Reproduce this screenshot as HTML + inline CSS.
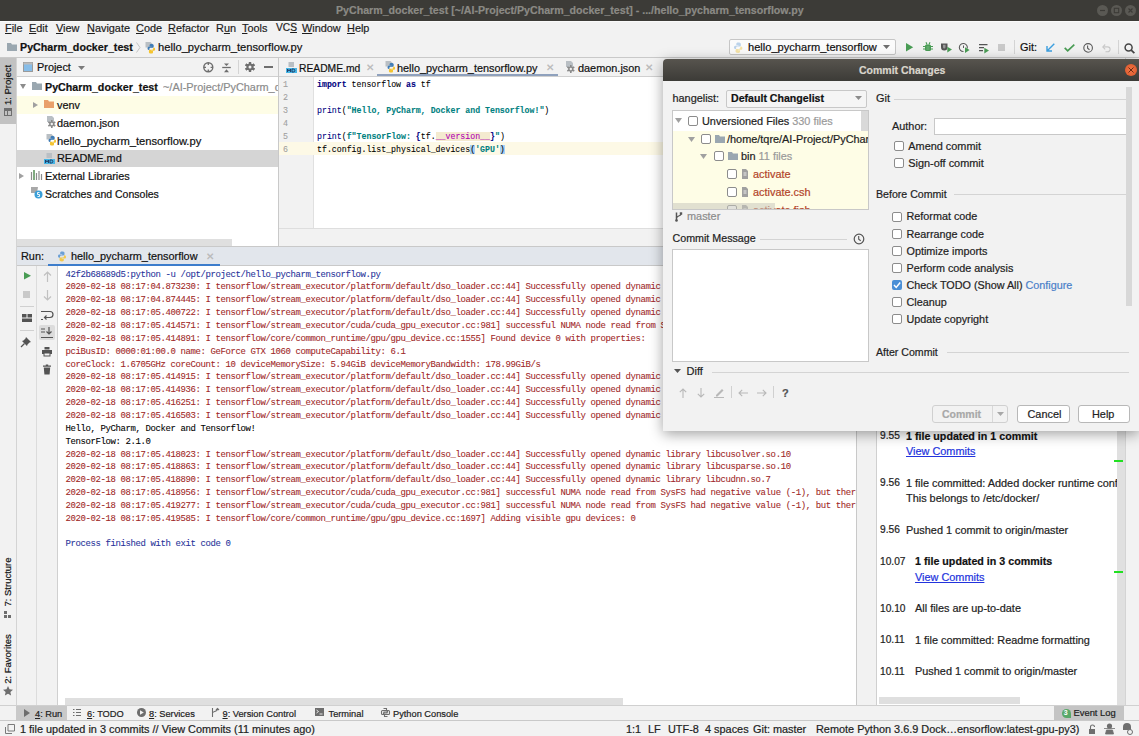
<!DOCTYPE html>
<html><head><meta charset="utf-8">
<style>
*{box-sizing:border-box;margin:0;padding:0}
html,body{width:1139px;height:736px;overflow:hidden}
body{position:relative;background:#f2f2f2;font-family:"Liberation Sans",sans-serif;font-size:10.9px;color:#1e1e1e}
.a{position:absolute}
.t{position:absolute;white-space:nowrap;line-height:14px;-webkit-text-stroke:0.2px currentColor}
.mono{font-family:"Liberation Mono",monospace;-webkit-text-stroke:0.08px currentColor}
.u{text-decoration:underline}
svg{position:absolute;overflow:visible}
</style></head><body>

<!-- ===== Title bar ===== -->
<div class="a" style="left:0;top:0;width:1139px;height:21px;background:#3c3b37"></div><div class="a" style="left:0;top:21px;width:1139px;height:1px;background:#fafafa"></div>
<div class="t" style="left:336px;top:3px;font-weight:bold;font-size:10.64px;color:#8b8a85">PyCharm_docker_test [~/AI-Project/PyCharm_docker_test] - .../hello_pycharm_tensorflow.py</div>
<div class="a" style="left:1096.5px;top:4.7px;width:11px;height:11px;border-radius:50%;background:#5a5954"></div>
<div class="a" style="left:1110.5px;top:4.7px;width:11px;height:11px;border-radius:50%;background:#5a5954"></div>
<div class="a" style="left:1124.8px;top:4.7px;width:11px;height:11px;border-radius:50%;background:#5a5954"></div>
<svg style="left:1096.5px;top:4.7px" width="11" height="11"><path d="M3 5.5h5" stroke="#3c3b37" stroke-width="1.2"/></svg>
<svg style="left:1110.5px;top:4.7px" width="11" height="11"><rect x="3.3" y="3.3" width="4.4" height="4.4" fill="none" stroke="#3c3b37" stroke-width="1.1"/></svg>
<svg style="left:1124.8px;top:4.7px" width="11" height="11"><path d="M3.5 3.5l4 4M7.5 3.5l-4 4" stroke="#3c3b37" stroke-width="1.1"/></svg>

<!-- ===== Menu bar ===== -->
<div class="a" style="left:0;top:22px;width:1139px;height:16px;background:#f2f2f2"></div>
<div class="t" style="left:5px;top:21px"><span class="u">F</span>ile</div>
<div class="t" style="left:29px;top:21px"><span class="u">E</span>dit</div>
<div class="t" style="left:56px;top:21px"><span class="u">V</span>iew</div>
<div class="t" style="left:87px;top:21px"><span class="u">N</span>avigate</div>
<div class="t" style="left:136px;top:21px"><span class="u">C</span>ode</div>
<div class="t" style="left:168px;top:21px"><span class="u">R</span>efactor</div>
<div class="t" style="left:216px;top:21px">R<span class="u">u</span>n</div>
<div class="t" style="left:242px;top:21px"><span class="u">T</span>ools</div>
<div class="t" style="left:276px;top:21px;font-size:10.2px">VC<span class="u">S</span></div>
<div class="t" style="left:302px;top:21px"><span class="u">W</span>indow</div>
<div class="t" style="left:347px;top:21px"><span class="u">H</span>elp</div>

<!-- ===== Nav bar ===== -->
<div class="a" style="left:0;top:38px;width:1139px;height:20px;background:#f2f2f2;border-bottom:1px solid #c9c9c9"></div>


<svg style="left:7px;top:43px" width="10" height="8"><path d="M0 0h4l1 1.5h5V8H0z" fill="#9aa7b0"/></svg>
<div class="t" style="left:20px;top:40px;font-weight:bold;font-size:10.7px;color:#111">PyCharm_docker_test</div>
<svg style="left:136px;top:42px" width="5" height="11"><path d="M0.5 0.5L4 5.5L0.5 10.5" fill="none" stroke="#c4c4c4" stroke-width="1"/></svg>
<svg style="left:145px;top:42px" width="11" height="12"><path d="M0.5 0h5l2 2v3.5h-7z" fill="#b9bfc4"/><g transform="translate(2.5 2) scale(0.95)"><path d="M4 0C2.6 0 2.2 .6 2.2 1.4V2.6H4.3V3H1.3C.5 3 0 3.7 0 4.6S.5 6.3 1.3 6.3H2V5.2C2 4.4 2.6 3.9 3.4 3.9H5.4C6 3.9 6.5 3.4 6.5 2.8V1.4C6.5 .6 5.8 0 4 0Z" fill="#3f7cb6"/><path d="M4 10C5.4 10 5.8 9.4 5.8 8.6V7.4H3.7V7H6.7C7.5 7 8 6.3 8 5.4S7.5 3.7 6.7 3.7H6V4.8C6 5.6 5.4 6.1 4.6 6.1H2.6C2 6.1 1.5 6.6 1.5 7.2V8.6C1.5 9.4 2.2 10 4 10Z" fill="#f4c430"/></g></svg>
<div class="t" style="left:158px;top:40px;color:#111;font-size:11.2px">hello_pycharm_tensorflow.py</div>

<div class="a" style="left:729px;top:39px;width:167px;height:16px;background:#fbfbfb;border:1px solid #c6c6c6;border-radius:2px"></div>
<svg style="left:733px;top:41.5px" width="11" height="11"><g transform="translate(1 0.5) scale(1.05)"><path d="M4 0C2.6 0 2.2 .6 2.2 1.4V2.6H4.3V3H1.3C.5 3 0 3.7 0 4.6S.5 6.3 1.3 6.3H2V5.2C2 4.4 2.6 3.9 3.4 3.9H5.4C6 3.9 6.5 3.4 6.5 2.8V1.4C6.5 .6 5.8 0 4 0Z" fill="#bcd3ea"/><path d="M4 10C5.4 10 5.8 9.4 5.8 8.6V7.4H3.7V7H6.7C7.5 7 8 6.3 8 5.4S7.5 3.7 6.7 3.7H6V4.8C6 5.6 5.4 6.1 4.6 6.1H2.6C2 6.1 1.5 6.6 1.5 7.2V8.6C1.5 9.4 2.2 10 4 10Z" fill="#f5e3a6"/></g></svg>
<div class="t" style="left:748px;top:40px;font-size:11.1px;color:#111">hello_pycharm_tensorflow</div>
<svg style="left:883px;top:45px" width="8" height="5"><path d="M0 0h7L3.5 4z" fill="#6e6e6e"/></svg>

<svg style="left:906px;top:43px" width="8" height="9"><path d="M0 0L7.2 4.2L0 8.4z" fill="#499c54"/></svg>
<svg style="left:922.5px;top:42px" width="10" height="10"><rect x="2" y="2.5" width="6" height="6.5" rx="1.5" fill="#499c54"/><path d="M3 0.3l1 2.2M7 0.3l-1 2.2M0 4.5h2M8 4.5h2M0 7h2M8 7h2" stroke="#499c54" stroke-width="1.1"/><path d="M3.5 5h3M3.5 7h3" stroke="#8fc79a" stroke-width="0.7"/></svg>
<svg style="left:940.5px;top:43px" width="12" height="10"><path d="M0 0.5h6.5v3.5a3.25 3.5 0 0 1-6.5 0z" fill="#545454"/><path d="M2 1.8h2.5v2.2a1.25 1.5 0 0 1-2.5 0z" fill="#9a9a9a"/><path d="M6.3 3.8L11 6.6L6.3 9.4z" fill="#499c54"/></svg>
<svg style="left:959px;top:42.5px" width="12" height="10"><path d="M8.2 5.5A4 4 0 1 0 4.5 8.5" fill="none" stroke="#5a5a5a" stroke-width="1.1"/><path d="M4.5 2.5v2.5" stroke="#5a5a5a" stroke-width="1"/><path d="M6 4.3L10.6 7.1L6 9.9z" fill="#499c54"/></svg>
<svg style="left:978.5px;top:43.5px" width="11" height="10"><path d="M0 0.6h8.5M0 3.6h5M0 6.6h4" stroke="#545454" stroke-width="1.2"/><path d="M5.3 3.8L10 6.6L5.3 9.4z" fill="#499c54"/></svg>
<div class="a" style="left:998px;top:44px;width:7px;height:7px;background:#c9c9c9"></div>
<div class="a" style="left:1013.5px;top:40px;width:1px;height:14px;background:#d4d4d4"></div>
<div class="t" style="left:1020px;top:40px;font-size:10.9px;color:#111">Git:</div>
<svg style="left:1046px;top:43px" width="9" height="9"><path d="M8.3 0.7L1.5 7.5M1 3v5h5" fill="none" stroke="#3d9fdf" stroke-width="1.4"/></svg>
<svg style="left:1064px;top:43.5px" width="11" height="8"><path d="M0.7 3.8l3 3L10.3 0.7" fill="none" stroke="#499c54" stroke-width="1.7"/></svg>
<svg style="left:1082.5px;top:42.5px" width="11" height="10"><circle cx="5.1" cy="4.9" r="4.3" fill="none" stroke="#5a5a5a" stroke-width="1.1"/><path d="M4.6 2.4v2.9l1.9 1.4" stroke="#5a5a5a" stroke-width="1.1" fill="none"/></svg>
<svg style="left:1102px;top:44px" width="10" height="8"><path d="M3.2 0.5L0.8 2.9l2.4 2.4" fill="none" stroke="#c8c8c8" stroke-width="1.1"/><path d="M1 2.9h4.7a2.4 2.4 0 0 1 0 4.8H3.5" fill="none" stroke="#c8c8c8" stroke-width="1.1"/></svg>
<div class="a" style="left:1117.5px;top:40px;width:1px;height:14px;background:#d4d4d4"></div>
<svg style="left:1124px;top:42.5px" width="12" height="11"><circle cx="4.6" cy="4.5" r="3.5" fill="none" stroke="#454545" stroke-width="1.5"/><path d="M7.2 7.1L10.4 10.2" stroke="#454545" stroke-width="1.7"/></svg>
<!-- ===== Left strip ===== -->
<div class="a" style="left:0;top:58px;width:17px;height:647px;background:#f2f2f2;border-right:1px solid #d4d4d4"></div>
<div class="a" style="left:0;top:58px;width:16px;height:66px;background:#c2c2c2"></div>

<!-- ===== Project panel ===== -->
<div class="a" style="left:17px;top:58px;width:262px;height:19px;background:#f2f2f2;border-bottom:1px solid #d0d0d0"></div>
<div class="a" style="left:17px;top:77px;width:261px;height:169px;background:#fff"></div>
<div class="a" style="left:278px;top:58px;width:1px;height:188px;background:#c9c9c9"></div>

<!-- ===== Editor ===== -->
<div class="a" style="left:279px;top:58px;width:400px;height:19px;background:#f2f2f2;border-bottom:1px solid #d0d0d0"></div>
<div class="a" style="left:279px;top:77px;width:400px;height:151px;background:#fff"></div>
<div class="a" style="left:279px;top:77px;width:35px;height:151px;background:#f2f2f2;border-right:1px solid #e0e0e0"></div>
<div class="a" style="left:279px;top:228px;width:400px;height:18px;background:#f2f2f2;border-top:1px solid #dedede"></div>

<div class="t" style="left:8px;top:85px;font-size:9.5px;color:#111;line-height:12px;transform:translate(-50%,-50%) rotate(-90deg)">1: Project</div><svg style="left:4px;top:108px" width="8" height="8"><path d="M0 0h8v8H0z M2 2v6M5 2v6" fill="#6e6e6e"/><path d="M1 3h2v4H1zM4 3h3v4H4z" fill="#c2c2c2"/></svg><div class="t" style="left:8px;top:582px;font-size:9.5px;color:#111;line-height:12px;transform:translate(-50%,-50%) rotate(-90deg)">7: Structure</div><svg style="left:4px;top:611px" width="7" height="7"><path d="M0 4h3v3H0zM4 4h3v3H4zM0 0h3v3H0z" fill="#6e6e6e"/></svg><div class="t" style="left:8px;top:659px;font-size:9.5px;color:#111;line-height:12px;transform:translate(-50%,-50%) rotate(-90deg)">2: Favorites</div><svg style="left:3px;top:686px" width="10" height="10"><path d="M5 0l1.5 3.3 3.5.4-2.6 2.4.7 3.5L5 7.8 1.9 9.6l.7-3.5L0 3.7l3.5-.4z" fill="#6e6e6e"/></svg>
<svg style="left:23px;top:62px" width="10" height="10"><rect x="0.5" y="0.5" width="9" height="9" fill="#87bde8" stroke="#9a9a9a"/><rect x="0.5" y="0.5" width="9" height="2" fill="#bbb"/></svg>
<div class="t" style="left:37px;top:60px;color:#111">Project</div>
<svg style="left:78px;top:66px" width="7" height="4"><path d="M0 0h7L3.5 4z" fill="#7a7a7a"/></svg>
<svg style="left:202.5px;top:61.8px" width="11" height="11"><circle cx="5.3" cy="5.3" r="4.5" fill="none" stroke="#6e6e6e" stroke-width="1.4"/><path d="M5.3 0.8v2.2M5.3 7.6v2.2M0.8 5.3h2.2M7.6 5.3h2.2" stroke="#6e6e6e" stroke-width="1.3"/></svg>
<svg style="left:222px;top:62.5px" width="9" height="10"><path d="M0.2 4.5h8.6" stroke="#6e6e6e" stroke-width="1.3"/><path d="M2 0.5h5L4.5 3zM2 9.3h5L4.5 6.3z" fill="#6e6e6e"/></svg>
<div class="a" style="left:238px;top:60px;width:1px;height:14px;background:#d4d4d4"></div>
<svg style="left:245.2px;top:62.3px" width="10" height="10"><g fill="#6e6e6e"><rect x="3.9" y="0" width="2.2" height="10" transform="rotate(0 5 5)"/><rect x="3.9" y="0" width="2.2" height="10" transform="rotate(60 5 5)"/><rect x="3.9" y="0" width="2.2" height="10" transform="rotate(120 5 5)"/><rect x="3.9" y="0" width="2.2" height="10" transform="rotate(180 5 5)"/><rect x="3.9" y="0" width="2.2" height="10" transform="rotate(240 5 5)"/><rect x="3.9" y="0" width="2.2" height="10" transform="rotate(300 5 5)"/></g><circle cx="5" cy="5" r="3.4" fill="#6e6e6e"/><circle cx="5" cy="5" r="1.5" fill="#f2f2f2"/></svg>
<div class="a" style="left:264px;top:66.4px;width:9px;height:1.6px;background:#6e6e6e"></div>
<div class="a" style="left:17px;top:96px;width:261px;height:18px;background:#fefde6"></div>
<div class="a" style="left:17px;top:150px;width:261px;height:17px;background:#d5d5d5"></div>

<svg style="left:20px;top:84px" width="6" height="5"><path d="M0 0h6L3 5z" fill="#8c8c8c"/></svg>
<svg style="left:32px;top:82px" width="10" height="8"><path d="M0 0h4l1 1.5h5V8H0z" fill="#9aa7b0"/></svg>
<div class="t" style="left:45px;top:80px;font-weight:bold;font-size:10.7px;color:#111">PyCharm_docker_test</div>
<div class="t" style="left:163px;top:80px;color:#8c8c8c;width:115px;overflow:hidden">~/AI-Project/PyCharm_docker_test</div>

<svg style="left:33px;top:102px" width="5" height="6"><path d="M0 0v6l5-3z" fill="#a0a0a0"/></svg>
<svg style="left:44px;top:100px" width="10" height="8"><path d="M0 0h4l1 1.5h5V8H0z" fill="#e9a06a"/></svg>
<div class="t" style="left:57px;top:98px;color:#111">venv</div>

<svg style="left:45.5px;top:115.5px" width="10" height="12"><path d="M1 0h5l2 2v4H1z" fill="#b9bfc4"/><g fill="#8a8a8a"><rect x="5" y="4" width="1.6" height="8"/><rect x="5" y="4" width="1.6" height="8" transform="rotate(60 5.8 8)"/><rect x="5" y="4" width="1.6" height="8" transform="rotate(120 5.8 8)"/></g><circle cx="5.8" cy="8" r="2.6" fill="#8a8a8a"/><circle cx="5.8" cy="8" r="1.2" fill="#f0f0f0"/></svg>
<div class="t" style="left:57px;top:115.5px;color:#111">daemon.json</div>

<svg style="left:46px;top:134px" width="11" height="12"><path d="M0.5 0h5l2 2v3.5h-7z" fill="#b9bfc4"/><g transform="translate(2.5 2) scale(0.95)"><path d="M4 0C2.6 0 2.2 .6 2.2 1.4V2.6H4.3V3H1.3C.5 3 0 3.7 0 4.6S.5 6.3 1.3 6.3H2V5.2C2 4.4 2.6 3.9 3.4 3.9H5.4C6 3.9 6.5 3.4 6.5 2.8V1.4C6.5 .6 5.8 0 4 0Z" fill="#3f7cb6"/><path d="M4 10C5.4 10 5.8 9.4 5.8 8.6V7.4H3.7V7H6.7C7.5 7 8 6.3 8 5.4S7.5 3.7 6.7 3.7H6V4.8C6 5.6 5.4 6.1 4.6 6.1H2.6C2 6.1 1.5 6.6 1.5 7.2V8.6C1.5 9.4 2.2 10 4 10Z" fill="#f4c430"/></g></svg>
<div class="t" style="left:57px;top:133.5px;color:#111;font-size:11.2px">hello_pycharm_tensorflow.py</div>

<svg style="left:44px;top:152px" width="11" height="12"><path d="M2.5 1h5.5v5H2.5z" fill="#b9bfc4"/><rect x="0" y="7" width="11" height="5" fill="#46b5e5"/><path d="M1.5 11V8l1.5 2 1.5-2v3M6 8v3h1.3a1.5 1.5 0 0 0 0-3z" stroke="#1d3560" stroke-width="0.9" fill="none"/></svg>
<div class="t" style="left:57px;top:151px;color:#111">README.md</div>

<svg style="left:19px;top:173px" width="5" height="6"><path d="M0 0v6l5-3z" fill="#a0a0a0"/></svg>
<svg style="left:31px;top:170px" width="11" height="10"><path d="M0.5 2v8M3 0v10M5.5 3v7M8 1v9M10.5 4v6" stroke="#8c8c8c" stroke-width="1.2"/><path d="M3 0v10" stroke="#5aa05a" stroke-width="1.2"/></svg>
<div class="t" style="left:45px;top:169px;color:#111">External Libraries</div>

<svg style="left:31px;top:187px" width="12" height="12"><path d="M0 0h7l-1 6H0z" fill="#a8a8a8"/><circle cx="7.5" cy="7.5" r="4" fill="#3b9fd8"/><path d="M8.5 5.5h-2v2h2v2h-2" stroke="#fff" stroke-width="0.9" fill="none"/></svg>
<div class="t" style="left:45px;top:186.5px;color:#111;font-size:10.5px">Scratches and Consoles</div>

<div class="a" style="left:17px;top:239px;width:215px;height:7px;background:#dfdfdf"></div>

<svg style="left:286px;top:61px" width="11" height="12"><path d="M2.5 1h5.5v5H2.5z" fill="#b9bfc4"/><rect x="0" y="7" width="11" height="5" fill="#46b5e5"/><path d="M1.5 11V8l1.5 2 1.5-2v3M6 8v3h1.3a1.5 1.5 0 0 0 0-3z" stroke="#1d3560" stroke-width="0.9" fill="none"/></svg>
<div class="t" style="left:299px;top:61.6px;font-size:10.3px;color:#111">README.md</div>
<div class="t" style="left:366px;top:60px;color:#b8b8b8;font-size:9.5px;margin-top:1px">&#x2715;</div>
<svg style="left:385px;top:61px" width="11" height="12"><path d="M0.5 0h5l2 2v3.5h-7z" fill="#b9bfc4"/><g transform="translate(2.5 2) scale(0.95)"><path d="M4 0C2.6 0 2.2 .6 2.2 1.4V2.6H4.3V3H1.3C.5 3 0 3.7 0 4.6S.5 6.3 1.3 6.3H2V5.2C2 4.4 2.6 3.9 3.4 3.9H5.4C6 3.9 6.5 3.4 6.5 2.8V1.4C6.5 .6 5.8 0 4 0Z" fill="#3f7cb6"/><path d="M4 10C5.4 10 5.8 9.4 5.8 8.6V7.4H3.7V7H6.7C7.5 7 8 6.3 8 5.4S7.5 3.7 6.7 3.7H6V4.8C6 5.6 5.4 6.1 4.6 6.1H2.6C2 6.1 1.5 6.6 1.5 7.2V8.6C1.5 9.4 2.2 10 4 10Z" fill="#f4c430"/></g></svg>
<div class="t" style="left:397px;top:61px;color:#111">hello_pycharm_tensorflow.py</div>
<div class="t" style="left:546px;top:60px;color:#b8b8b8;font-size:9.5px;margin-top:1px">&#x2715;</div>
<div class="a" style="left:377px;top:74px;width:181px;height:2px;background:#8fa1bd"></div>
<svg style="left:565px;top:61px" width="10" height="12"><path d="M1 0h5l2 2v4H1z" fill="#b9bfc4"/><g fill="#8a8a8a"><rect x="5" y="4" width="1.6" height="8"/><rect x="5" y="4" width="1.6" height="8" transform="rotate(60 5.8 8)"/><rect x="5" y="4" width="1.6" height="8" transform="rotate(120 5.8 8)"/></g><circle cx="5.8" cy="8" r="2.6" fill="#8a8a8a"/><circle cx="5.8" cy="8" r="1.2" fill="#f0f0f0"/></svg>
<div class="t" style="left:578px;top:61px;color:#111">daemon.json</div>
<div class="t" style="left:645px;top:60px;color:#b8b8b8;font-size:9.5px;margin-top:1px">&#x2715;</div>


<div class="a" style="left:279px;top:142px;width:384px;height:13px;background:#fdf9e6"></div>
<div class="mono a" style="left:283px;top:77.5px;font-size:8.3px;line-height:13px;color:#a0a0a0;white-space:pre">1
2
3
4
5
6</div>
<div class="mono a" style="left:317px;top:77.5px;font-size:8.24px;line-height:13px;color:#000;white-space:pre"><b style="color:#000080">import</b> tensorflow <b style="color:#000080">as</b> tf

<span style="color:#000080">print</span>(<b style="color:#008080">"Hello, PyCharm, Docker and Tensorflow!"</b>)

<span style="color:#000080">print</span>(<b style="color:#008080">f"TensorFlow: </b><b style="color:#000080">{</b>tf.<span style="color:#b200b2;background:#f4ead0">__version__</span><b style="color:#000080">}</b><b style="color:#008080">"</b>)
tf.config.list_physical_devices<span style="background:#a7d0f5">(</span><b style="color:#008080">'GPU'</b><span style="background:#a7d0f5">)</span></div>

<!-- ===== Run panel ===== -->
<div class="a" style="left:17px;top:246px;width:840px;height:20px;background:#e2e6ec;border-top:1px solid #c9c9c9;border-bottom:1px solid #c9c9c9"></div>
<div class="a" style="left:17px;top:266px;width:40px;height:439px;background:#f2f2f2"></div>
<div class="a" style="left:36px;top:266px;width:1px;height:439px;background:#dcdcdc"></div>
<div class="a" style="left:57px;top:266px;width:800px;height:439px;background:#fff;border-left:1px solid #d0d0d0"></div>


<div class="t" style="left:21px;top:249px;color:#111">Run:</div>
<svg style="left:57px;top:251px" width="11" height="11"><g transform="translate(1 0.5) scale(1.0)"><path d="M4 0C2.6 0 2.2 .6 2.2 1.4V2.6H4.3V3H1.3C.5 3 0 3.7 0 4.6S.5 6.3 1.3 6.3H2V5.2C2 4.4 2.6 3.9 3.4 3.9H5.4C6 3.9 6.5 3.4 6.5 2.8V1.4C6.5 .6 5.8 0 4 0Z" fill="#6a9fd6"/><path d="M4 10C5.4 10 5.8 9.4 5.8 8.6V7.4H3.7V7H6.7C7.5 7 8 6.3 8 5.4S7.5 3.7 6.7 3.7H6V4.8C6 5.6 5.4 6.1 4.6 6.1H2.6C2 6.1 1.5 6.6 1.5 7.2V8.6C1.5 9.4 2.2 10 4 10Z" fill="#f2c94c"/></g></svg>
<div class="t" style="left:71px;top:249px;color:#111">hello_pycharm_tensorflow</div>
<div class="t" style="left:206px;top:249px;color:#b8b8b8;font-size:9.5px;margin-top:1px">&#x2715;</div>
<div class="a" style="left:48px;top:263.5px;width:172px;height:2.5px;background:#3d7dcc"></div>

<svg style="left:23.5px;top:272px" width="8" height="9"><path d="M0 0L7 3.8L0 7.6z" fill="#499c54"/></svg>
<div class="a" style="left:23px;top:291px;width:7px;height:7px;background:#c9c9c9"></div>
<div class="a" style="left:20px;top:306px;width:14px;height:1px;background:#d0d0d0"></div>
<svg style="left:22px;top:314px" width="10" height="8"><path d="M0 0h4.5v3.5H0zM5.5 0H10v3.5H5.5zM0 4.5h10V8H0z" fill="#545454"/></svg>
<div class="a" style="left:20px;top:330px;width:14px;height:1px;background:#d0d0d0"></div>
<svg style="left:21px;top:336px" width="11" height="11"><path d="M5 1l5 5-1.5.5-2 2L6 10 1 5l1.5-.5 2-2z" fill="#545454"/><path d="M3.5 7.5L0 11" stroke="#545454" stroke-width="1.3"/></svg>

<svg style="left:43px;top:271px" width="9" height="11"><path d="M4.5 1v10M1 4.5l3.5-3.5L8 4.5" fill="none" stroke="#c0c0c0" stroke-width="1.2"/></svg>
<svg style="left:43px;top:290px" width="9" height="11"><path d="M4.5 0v10M1 6.5l3.5 3.5L8 6.5" fill="none" stroke="#c0c0c0" stroke-width="1.2"/></svg>
<svg style="left:41px;top:310px" width="12" height="11"><path d="M0 1.5h9a3 3 0 0 1 0 6H4" fill="none" stroke="#545454" stroke-width="1.2"/><path d="M5.5 5.5L3.5 7.5l2 2M0 9.5h2" fill="none" stroke="#545454" stroke-width="1.2"/></svg>
<div class="a" style="left:39px;top:325px;width:16px;height:15px;background:#dcdcdc;border-radius:2px"></div>
<svg style="left:41px;top:327px" width="12" height="11"><path d="M0 2h4M0 5h4M0 10.5h12M8 0v7M5.5 4.5L8 7l2.5-2.5" fill="none" stroke="#545454" stroke-width="1.2"/></svg>
<svg style="left:42px;top:347px" width="10" height="10"><path d="M2.5 0h5v2.5h-5z" fill="#545454"/><path d="M0 3h10v4H8.5v2.5h-7V7H0z" fill="#545454"/><path d="M2.5 6.5h5v2h-5z" fill="#f2f2f2"/></svg>
<svg style="left:43px;top:364.5px" width="8" height="10"><path d="M0 1.2h8M2.8 0h2.4" stroke="#545454" stroke-width="1.2"/><path d="M0.8 2.5h6.4l-.6 7H1.4z" fill="#545454"/></svg>
<div class="a" style="left:58px;top:266px;width:798px;height:439px;overflow:hidden">
<div class="mono a" style="left:7.5px;top:1.60px;font-size:9px;letter-spacing:-0.4px;line-height:12px;white-space:pre;transform:scaleY(1.08);transform-origin:0 0"><span style="color:#27339a">42f2b68689d5:python -u /opt/project/hello_pycharm_tensorflow.py</span></div>
<div class="mono a" style="left:7.5px;top:14.45px;font-size:9px;letter-spacing:-0.4px;line-height:12px;white-space:pre;transform:scaleY(1.08);transform-origin:0 0"><span style="color:#a02828">2020-02-18 08:17:04.873230: I tensorflow/stream_executor/platform/default/dso_loader.cc:44] Successfully opened dynamic library libnvinfer.so.6</span></div>
<div class="mono a" style="left:7.5px;top:27.30px;font-size:9px;letter-spacing:-0.4px;line-height:12px;white-space:pre;transform:scaleY(1.08);transform-origin:0 0"><span style="color:#a02828">2020-02-18 08:17:04.874445: I tensorflow/stream_executor/platform/default/dso_loader.cc:44] Successfully opened dynamic library libnvinfer_plugin.so.6</span></div>
<div class="mono a" style="left:7.5px;top:40.15px;font-size:9px;letter-spacing:-0.4px;line-height:12px;white-space:pre;transform:scaleY(1.08);transform-origin:0 0"><span style="color:#a02828">2020-02-18 08:17:05.400722: I tensorflow/stream_executor/platform/default/dso_loader.cc:44] Successfully opened dynamic library libcuda.so.1</span></div>
<div class="mono a" style="left:7.5px;top:53.00px;font-size:9px;letter-spacing:-0.4px;line-height:12px;white-space:pre;transform:scaleY(1.08);transform-origin:0 0"><span style="color:#a02828">2020-02-18 08:17:05.414571: I tensorflow/stream_executor/cuda/cuda_gpu_executor.cc:981] successful NUMA node read from SysFS had negative value (-1), but there must be at least one NUMA node</span></div>
<div class="mono a" style="left:7.5px;top:65.85px;font-size:9px;letter-spacing:-0.4px;line-height:12px;white-space:pre;transform:scaleY(1.08);transform-origin:0 0"><span style="color:#a02828">2020-02-18 08:17:05.414891: I tensorflow/core/common_runtime/gpu/gpu_device.cc:1555] Found device 0 with properties:</span></div>
<div class="mono a" style="left:7.5px;top:78.70px;font-size:9px;letter-spacing:-0.4px;line-height:12px;white-space:pre;transform:scaleY(1.08);transform-origin:0 0"><span style="color:#a02828">pciBusID: 0000:01:00.0 name: GeForce GTX 1060 computeCapability: 6.1</span></div>
<div class="mono a" style="left:7.5px;top:91.55px;font-size:9px;letter-spacing:-0.4px;line-height:12px;white-space:pre;transform:scaleY(1.08);transform-origin:0 0"><span style="color:#a02828">coreClock: 1.6705GHz coreCount: 10 deviceMemorySize: 5.94GiB deviceMemoryBandwidth: 178.99GiB/s</span></div>
<div class="mono a" style="left:7.5px;top:104.40px;font-size:9px;letter-spacing:-0.4px;line-height:12px;white-space:pre;transform:scaleY(1.08);transform-origin:0 0"><span style="color:#a02828">2020-02-18 08:17:05.414915: I tensorflow/stream_executor/platform/default/dso_loader.cc:44] Successfully opened dynamic library libcudart.so.10.1</span></div>
<div class="mono a" style="left:7.5px;top:117.25px;font-size:9px;letter-spacing:-0.4px;line-height:12px;white-space:pre;transform:scaleY(1.08);transform-origin:0 0"><span style="color:#a02828">2020-02-18 08:17:05.414936: I tensorflow/stream_executor/platform/default/dso_loader.cc:44] Successfully opened dynamic library libcublas.so.10</span></div>
<div class="mono a" style="left:7.5px;top:130.10px;font-size:9px;letter-spacing:-0.4px;line-height:12px;white-space:pre;transform:scaleY(1.08);transform-origin:0 0"><span style="color:#a02828">2020-02-18 08:17:05.416251: I tensorflow/stream_executor/platform/default/dso_loader.cc:44] Successfully opened dynamic library libcufft.so.10</span></div>
<div class="mono a" style="left:7.5px;top:142.95px;font-size:9px;letter-spacing:-0.4px;line-height:12px;white-space:pre;transform:scaleY(1.08);transform-origin:0 0"><span style="color:#a02828">2020-02-18 08:17:05.416503: I tensorflow/stream_executor/platform/default/dso_loader.cc:44] Successfully opened dynamic library libcurand.so.10</span></div>
<div class="mono a" style="left:7.5px;top:155.80px;font-size:9px;letter-spacing:-0.4px;line-height:12px;white-space:pre;transform:scaleY(1.08);transform-origin:0 0"><span style="color:#000">Hello, PyCharm, Docker and Tensorflow!</span></div>
<div class="mono a" style="left:7.5px;top:168.65px;font-size:9px;letter-spacing:-0.4px;line-height:12px;white-space:pre;transform:scaleY(1.08);transform-origin:0 0"><span style="color:#000">TensorFlow: 2.1.0</span></div>
<div class="mono a" style="left:7.5px;top:181.50px;font-size:9px;letter-spacing:-0.4px;line-height:12px;white-space:pre;transform:scaleY(1.08);transform-origin:0 0"><span style="color:#a02828">2020-02-18 08:17:05.418023: I tensorflow/stream_executor/platform/default/dso_loader.cc:44] Successfully opened dynamic library libcusolver.so.10</span></div>
<div class="mono a" style="left:7.5px;top:194.35px;font-size:9px;letter-spacing:-0.4px;line-height:12px;white-space:pre;transform:scaleY(1.08);transform-origin:0 0"><span style="color:#a02828">2020-02-18 08:17:05.418863: I tensorflow/stream_executor/platform/default/dso_loader.cc:44] Successfully opened dynamic library libcusparse.so.10</span></div>
<div class="mono a" style="left:7.5px;top:207.20px;font-size:9px;letter-spacing:-0.4px;line-height:12px;white-space:pre;transform:scaleY(1.08);transform-origin:0 0"><span style="color:#a02828">2020-02-18 08:17:05.418890: I tensorflow/stream_executor/platform/default/dso_loader.cc:44] Successfully opened dynamic library libcudnn.so.7</span></div>
<div class="mono a" style="left:7.5px;top:220.05px;font-size:9px;letter-spacing:-0.4px;line-height:12px;white-space:pre;transform:scaleY(1.08);transform-origin:0 0"><span style="color:#a02828">2020-02-18 08:17:05.418956: I tensorflow/stream_executor/cuda/cuda_gpu_executor.cc:981] successful NUMA node read from SysFS had negative value (-1), but there must be at least one NUMA node</span></div>
<div class="mono a" style="left:7.5px;top:232.90px;font-size:9px;letter-spacing:-0.4px;line-height:12px;white-space:pre;transform:scaleY(1.08);transform-origin:0 0"><span style="color:#a02828">2020-02-18 08:17:05.419277: I tensorflow/stream_executor/cuda/cuda_gpu_executor.cc:981] successful NUMA node read from SysFS had negative value (-1), but there must be at least one NUMA node</span></div>
<div class="mono a" style="left:7.5px;top:245.75px;font-size:9px;letter-spacing:-0.4px;line-height:12px;white-space:pre;transform:scaleY(1.08);transform-origin:0 0"><span style="color:#a02828">2020-02-18 08:17:05.419585: I tensorflow/core/common_runtime/gpu/gpu_device.cc:1697] Adding visible gpu devices: 0</span></div>
<div class="mono a" style="left:7.5px;top:258.60px;font-size:9px;letter-spacing:-0.4px;line-height:12px;white-space:pre;transform:scaleY(1.08);transform-origin:0 0"><span style="color:#000"></span></div>
<div class="mono a" style="left:7.5px;top:271.45px;font-size:9px;letter-spacing:-0.4px;line-height:12px;white-space:pre;transform:scaleY(1.08);transform-origin:0 0"><span style="color:#27339a">Process finished with exit code 0</span></div>
</div>
<div class="a" style="left:65px;top:698px;width:558px;height:7px;background:#dfdfdf"></div>

<!-- ===== Event log panel ===== -->
<div class="a" style="left:856px;top:246px;width:283px;height:459px;background:#f2f2f2"></div>
<div class="a" style="left:856px;top:246px;width:1px;height:459px;background:#c9c9c9"></div>
<div class="a" style="left:876px;top:266px;width:241px;height:439px;background:#fff;border-left:1px solid #d0d0d0"></div>
<div class="a" style="left:1117px;top:266px;width:8px;height:439px;background:#e0e0e0"></div>
<div class="a" style="left:1125px;top:58px;width:14px;height:647px;background:#f2f2f2;border-left:1px solid #d4d4d4"></div>

<!-- ===== Bottom tool bar ===== -->
<div class="a" style="left:0;top:705px;width:1139px;height:16px;background:#f2f2f2;border-top:1px solid #d0d0d0;border-bottom:1px solid #c9c9c9"></div>
<div class="a" style="left:16px;top:706px;width:51px;height:14px;background:#c9c9c9"></div>

<!-- ===== Status bar ===== -->
<div class="a" style="left:0;top:721px;width:1139px;height:15px;background:#f2f2f2"></div>

<div class="a" style="left:877px;top:266px;width:240px;height:439px;overflow:hidden">
<div class="t" style="left:3px;top:163.1px;color:#222;font-size:10.2px">9.55</div>
<div class="t" style="left:29px;top:162.5px;color:#111;font-weight:bold;font-size:10.7px">1 file updated in 1 commit</div>
<div class="t u" style="left:29px;top:178px;color:#2233dd">View Commits</div>

<div class="t" style="left:3px;top:210.1px;color:#222;font-size:10.2px">9.56</div>
<div class="t" style="left:29px;top:209.5px;color:#222">1 file committed: Added docker runtime configuration</div>
<div class="t" style="left:29px;top:225px;color:#222">This belongs to /etc/docker/</div>
<div class="t" style="left:3px;top:257.1px;color:#222;font-size:10.2px">9.56</div>
<div class="t" style="left:29px;top:256.5px;color:#222">Pushed 1 commit to origin/master</div>
<div class="t" style="left:3px;top:288.6px;color:#222;font-size:10.2px">10.07</div>
<div class="t" style="left:38px;top:288px;color:#111;font-weight:bold;font-size:10.7px">1 file updated in 3 commits</div>
<div class="t u" style="left:38px;top:304px;color:#2233dd">View Commits</div>

<div class="t" style="left:3px;top:335.6px;color:#222;font-size:10.2px">10.10</div>
<div class="t" style="left:38px;top:335px;color:#222">All files are up-to-date</div>
<div class="t" style="left:3px;top:367.1px;color:#222;font-size:10.2px">10.11</div>
<div class="t" style="left:38px;top:366.5px;color:#222">1 file committed: Readme formatting</div>
<div class="t" style="left:3px;top:398.6px;color:#222;font-size:10.2px">10.11</div>
<div class="t" style="left:38px;top:398px;color:#222">Pushed 1 commit to origin/master</div>
<div class="a" style="left:2px;top:431px;width:141px;height:7px;background:#dfdfdf"></div>
</div>
<svg style="left:24px;top:709px" width="6" height="8"><path d="M0 0v8l6-4z" fill="#6e6e6e"/></svg>
<div class="t" style="left:35px;top:706.5px;font-size:9.25px;color:#222"><span class="u">4</span>: Run</div>
<svg style="left:73px;top:709px" width="8" height="7"><path d="M0 0.5h1.5M0 3.5h1.5M0 6.5h1.5M3 0.5h5M3 3.5h5M3 6.5h5" stroke="#6e6e6e" stroke-width="1"/></svg>
<div class="t" style="left:87px;top:706.5px;font-size:9.25px;color:#222"><span class="u">6</span>: TODO</div>
<svg style="left:137px;top:708px" width="9" height="9"><circle cx="4.5" cy="4.5" r="4.5" fill="#6e6e6e"/><path d="M3 2.2v4.6l3.8-2.3z" fill="#f2f2f2"/></svg>
<div class="t" style="left:149px;top:706.5px;font-size:9.25px;color:#222"><span class="u">8</span>: Services</div>
<svg style="left:211px;top:708px" width="8" height="9"><path d="M1.5 0v9M1.5 5c0-2 5-1 5-4M5 2l1.5-1.5L8 2" fill="none" stroke="#6e6e6e" stroke-width="1.1"/></svg>
<div class="t" style="left:222.5px;top:706.5px;font-size:9.25px;color:#222"><span class="u">9</span>: Version Control</div>
<svg style="left:315px;top:708px" width="9" height="8"><rect width="9" height="8" fill="#6e6e6e"/><path d="M1.5 2l2 1.5-2 1.5M4.5 6h3" stroke="#f2f2f2" stroke-width="0.9" fill="none"/></svg>
<div class="t" style="left:328.5px;top:706.5px;font-size:9.25px;color:#222">Terminal</div>
<svg style="left:381px;top:708px" width="9" height="9"><path d="M2.5 0.5h3v2H1.5a1 1 0 0 0-1 1v2a1 1 0 0 0 1 1h1V5h3.5V3.5" fill="none" stroke="#6e6e6e" stroke-width="1.1"/><path d="M6.5 8.5h-3v-2h4a1 1 0 0 0 1-1v-2a1 1 0 0 0-1-1h-1V4H3v1.5" fill="none" stroke="#6e6e6e" stroke-width="1.1"/></svg>
<div class="t" style="left:393px;top:706.5px;font-size:9.25px;color:#222">Python Console</div>
<div class="a" style="left:1054px;top:706px;width:70px;height:14px;background:#c4c4c4"></div>
<div class="a" style="left:1061.5px;top:708.5px;width:9px;height:9px;border-radius:50% 50% 0 50%;background:#59a869"></div><div class="t" style="left:1063.8px;top:706px;font-size:7px;line-height:14px;color:#fff;font-weight:bold;-webkit-text-stroke:0">3</div>
<div class="t" style="left:1073.5px;top:706px;font-size:9.4px;color:#222">Event Log</div>

<svg style="left:5px;top:724px" width="10" height="10"><path d="M3 0.5h6.5v6.5H3z" fill="#f2f2f2" stroke="#7a7a7a"/><path d="M0.5 3v6.5H7" fill="none" stroke="#7a7a7a"/></svg>
<div class="t" style="left:20px;top:721.5px;color:#222">1 file updated in 3 commits // View Commits (11 minutes ago)</div>
<div class="t" style="left:626px;top:721.5px;color:#222">1:1</div>
<div class="t" style="left:648px;top:721.5px;color:#222">LF</div>
<div class="t" style="left:668px;top:721.5px;color:#222">UTF-8</div>
<div class="t" style="left:705px;top:721.5px;color:#222">4 spaces</div>
<div class="t" style="left:753px;top:721.5px;color:#222">Git: master</div>
<div class="t" style="left:816px;top:721.5px;color:#222">Remote Python 3.6.9 Dock…ensorflow:latest-gpu-py3)</div>
<svg style="left:1088px;top:724px" width="10" height="10"><path d="M1 5h6v5H1z" fill="#6e6e6e"/><path d="M2.5 5V3a2 2 0 0 1 4 0" fill="none" stroke="#6e6e6e" stroke-width="1.1"/></svg>
<svg style="left:1104px;top:723px" width="11" height="11"><circle cx="5.5" cy="3" r="2.6" fill="#6e6e6e"/><path d="M0 5.5h11M1.5 11l1-4h6l1 4z" fill="#6e6e6e" stroke="#6e6e6e" stroke-width="0.8"/></svg>
<svg style="left:1121px;top:723px" width="12" height="12"><path d="M2 4a4 4 0 0 1 8 0v3H2z" fill="#6e6e6e"/><circle cx="9" cy="9" r="2.5" fill="#f2f2f2" stroke="#6e6e6e" stroke-width="1"/></svg>

<!-- ===== Commit dialog ===== -->
<div class="a" style="left:663px;top:59px;width:476px;height:372px;background:#f2f2f2;box-shadow:0 3px 14px rgba(0,0,0,0.38);border-radius:4px 0 0 0"></div>
<div class="a" style="left:663px;top:59px;width:476px;height:22px;background:linear-gradient(#57544e,#3c3b37);border-radius:4px 0 0 0"></div>

<div class="a" style="left:1114px;top:460px;width:9px;height:1.5px;background:#22e022"></div><div class="a" style="left:1114px;top:571px;width:9px;height:1.5px;background:#22e022"></div>
<div class="t" style="left:859px;top:62.5px;font-weight:bold;font-size:10.5px;color:#d9d5cc">Commit Changes</div>
<div class="a" style="left:1124.5px;top:64px;width:12px;height:12px;border-radius:50%;background:radial-gradient(#f0774a,#dd5426)"></div>
<svg style="left:1127.5px;top:67px" width="6" height="6"><path d="M0.5 0.5l5 5M5.5 0.5l-5 5" stroke="#6b2a12" stroke-width="1"/></svg>
<div class="t" style="left:672.5px;top:90.6px;color:#222">hangelist:</div>
<div class="a" style="left:726px;top:89.5px;width:141px;height:18px;background:#f5f5f5;border:1px solid #c8c8c8;border-radius:2px"></div>
<div class="t" style="left:731px;top:91.1px;font-weight:bold;font-size:10.6px;color:#111">Default Changelist</div>
<svg style="left:855px;top:96px" width="7" height="4"><path d="M0 0h7L3.5 4z" fill="#8c8c8c"/></svg>
<div class="a" style="left:672px;top:110px;width:197px;height:100px;background:#fefde6;border:1px solid #c8c8c8;overflow:hidden">
<div class="a" style="left:0;top:0;width:195px;height:20px;background:#fff"></div>
<svg style="left:2px;top:7px" width="7" height="5"><path d="M0 0h7L3.5 5z" fill="#a0a0a0"/></svg><div class="a" style="left:15px;top:4.7px;width:10px;height:10px;background:#fff;border:1px solid #8c8c8c;border-radius:2px"></div><div class="t" style="left:29px;top:2.5px;color:#222">Unversioned Files <span style="color:#9a9a9a">330 files</span></div><svg style="left:15px;top:26px" width="7" height="5"><path d="M0 0h7L3.5 5z" fill="#a0a0a0"/></svg><div class="a" style="left:28px;top:23.2px;width:10px;height:10px;background:#fff;border:1px solid #8c8c8c;border-radius:2px"></div><svg style="left:42px;top:24px" width="10" height="8"><path d="M0 0h4l1 1.5h5V8H0z" fill="#9aa7b0"/></svg><div class="t" style="left:54px;top:21px;color:#222">/home/tqre/AI-Project/PyCharm_docker_test</div><svg style="left:27px;top:43px" width="7" height="5"><path d="M0 0h7L3.5 5z" fill="#a0a0a0"/></svg><div class="a" style="left:41px;top:40.3px;width:10px;height:10px;background:#fff;border:1px solid #8c8c8c;border-radius:2px"></div><svg style="left:55px;top:41px" width="10" height="8"><path d="M0 0h4l1 1.5h5V8H0z" fill="#9aa7b0"/></svg><div class="t" style="left:68px;top:38.1px;color:#222">bin <span style="color:#9a9a9a">11 files</span></div><div class="a" style="left:54px;top:58.4px;width:10px;height:10px;background:#fff;border:1px solid #8c8c8c;border-radius:2px"></div><svg style="left:68px;top:58.4px" width="8" height="10"><path d="M1 0h4l2 2v8H1z" fill="#a0a0a0"/><path d="M2.5 4h3M2.5 6h3" stroke="#fff" stroke-width="0.8"/></svg><div class="t" style="left:80px;top:56.2px;color:#b2442a">activate</div><div class="a" style="left:54px;top:76.4px;width:10px;height:10px;background:#fff;border:1px solid #8c8c8c;border-radius:2px"></div><svg style="left:68px;top:76.4px" width="8" height="10"><path d="M1 0h4l2 2v8H1z" fill="#a0a0a0"/><path d="M2.5 4h3M2.5 6h3" stroke="#fff" stroke-width="0.8"/></svg><div class="t" style="left:80px;top:74.2px;color:#b2442a">activate.csh</div><div class="a" style="left:54px;top:94.4px;width:10px;height:10px;background:#fff;border:1px solid #8c8c8c;border-radius:2px"></div><svg style="left:68px;top:94.4px" width="8" height="10"><path d="M1 0h4l2 2v8H1z" fill="#a0a0a0"/><path d="M2.5 4h3M2.5 6h3" stroke="#fff" stroke-width="0.8"/></svg><div class="t" style="left:80px;top:92.2px;color:#b2442a">activate.fish</div><div class="a" style="left:0;top:92px;width:102px;height:7px;background:rgba(200,200,190,0.55)"></div><div class="a" style="left:188px;top:0;width:7px;height:20px;background:#d9d9d9"></div></div>
<svg style="left:674.5px;top:211.5px" width="8" height="10"><path d="M1.5 0.5v8" stroke="#555" stroke-width="1.5"/><circle cx="1.5" cy="8.5" r="1.3" fill="#555"/><path d="M1.5 6c0-2.5 4.5-1.5 4.5-4" fill="none" stroke="#555" stroke-width="1.3"/><rect x="4.8" y="0.3" width="2.4" height="2.4" fill="#555"/></svg>
<div class="t" style="left:687px;top:209.2px;color:#8c8c8c">master</div>
<div class="t" style="left:672.5px;top:231.4px;color:#222;font-size:10.7px">Commit Message</div>
<div class="a" style="left:760px;top:238.5px;width:87px;height:1px;background:#d4d4d4"></div>
<svg style="left:853px;top:233px" width="12" height="12"><circle cx="6" cy="6" r="4.8" fill="none" stroke="#545454" stroke-width="1.2"/><path d="M5.7 3v3.3l2 1.4" stroke="#545454" stroke-width="1.1" fill="none"/></svg>
<div class="a" style="left:672px;top:249px;width:197px;height:113px;background:#fff;border:1px solid #c8c8c8"></div>
<svg style="left:674px;top:369px" width="7" height="4"><path d="M0 0h7L3.5 4z" fill="#545454"/></svg>
<div class="t" style="left:686.5px;top:364.1px;color:#222;font-size:11px">Diff</div>
<div class="a" style="left:712px;top:372px;width:417px;height:1px;background:#d4d4d4"></div>
<svg style="left:679px;top:388px" width="8" height="10"><path d="M4 1v9M0.8 4.2L4 1l3.2 3.2" fill="none" stroke="#b8b8b8" stroke-width="1.1"/></svg>
<svg style="left:697px;top:388px" width="8" height="10"><path d="M4 0v9M0.8 5.8L4 9l3.2-3.2" fill="none" stroke="#b8b8b8" stroke-width="1.1"/></svg>
<svg style="left:714px;top:387px" width="11" height="11"><path d="M2 8L8 2l1.5 1.5-6 6H2z" fill="#b8b8b8"/><path d="M0 10.5h10" stroke="#b8b8b8" stroke-width="1"/></svg>
<div class="a" style="left:731px;top:386px;width:1px;height:12px;background:#d0d0d0"></div>
<svg style="left:738px;top:389px" width="10" height="8"><path d="M1 4h9M4.2 0.8L1 4l3.2 3.2" fill="none" stroke="#b8b8b8" stroke-width="1.1"/></svg>
<svg style="left:757px;top:389px" width="10" height="8"><path d="M0 4h9M5.8 0.8L9 4 5.8 7.2" fill="none" stroke="#b8b8b8" stroke-width="1.1"/></svg>
<div class="a" style="left:773px;top:386px;width:1px;height:12px;background:#d0d0d0"></div>
<div class="t" style="left:782px;top:385.8px;color:#545454;font-weight:bold;font-size:11px">?</div>
<div class="t" style="left:876px;top:91.2px;color:#222">Git</div>
<div class="a" style="left:894px;top:98.5px;width:235px;height:1px;background:#d4d4d4"></div>
<div class="t" style="left:892px;top:119.4px;color:#222">Author:</div>
<div class="a" style="left:934px;top:118px;width:194px;height:17px;background:#fff;border:1px solid #c8c8c8"></div>
<div class="a" style="left:894px;top:141.2px;width:10px;height:10px;background:#fff;border:1px solid #8c8c8c;border-radius:2px"></div>
<div class="t" style="left:908.3px;top:139.0px;color:#222">Amend commit</div>
<div class="a" style="left:894px;top:157.8px;width:10px;height:10px;background:#fff;border:1px solid #8c8c8c;border-radius:2px"></div>
<div class="t" style="left:908.3px;top:155.6px;color:#222">Sign-off commit</div>
<div class="t" style="left:876px;top:186.8px;color:#222;font-size:10.6px">Before Commit</div>
<div class="a" style="left:954px;top:194px;width:175px;height:1px;background:#d4d4d4"></div>
<div class="a" style="left:892px;top:211.5px;width:10px;height:10px;background:#fff;border:1px solid #8c8c8c;border-radius:2px"></div>
<div class="t" style="left:906.5px;top:209.3px;color:#222;font-size:10.8px">Reformat code</div>
<div class="a" style="left:892px;top:228.7px;width:10px;height:10px;background:#fff;border:1px solid #8c8c8c;border-radius:2px"></div>
<div class="t" style="left:906.5px;top:226.5px;color:#222;font-size:10.8px">Rearrange code</div>
<div class="a" style="left:892px;top:245.8px;width:10px;height:10px;background:#fff;border:1px solid #8c8c8c;border-radius:2px"></div>
<div class="t" style="left:906.5px;top:243.6px;color:#222;font-size:10.8px">Optimize imports</div>
<div class="a" style="left:892px;top:263px;width:10px;height:10px;background:#fff;border:1px solid #8c8c8c;border-radius:2px"></div>
<div class="t" style="left:906.5px;top:260.8px;color:#222;font-size:10.8px">Perform code analysis</div>
<div class="a" style="left:892px;top:280px;width:10px;height:10px;background:#4a8fd6;border-radius:2px"></div><svg style="left:892px;top:280px" width="10" height="10"><path d="M2 5l2.2 2.4L8.2 2.5" fill="none" stroke="#fff" stroke-width="1.5"/></svg>
<div class="t" style="left:906.5px;top:277.8px;color:#222;font-size:10.8px">Check TODO (Show All) <span style="color:#4a7fc9">Configure</span></div>
<div class="a" style="left:892px;top:297.2px;width:10px;height:10px;background:#fff;border:1px solid #8c8c8c;border-radius:2px"></div>
<div class="t" style="left:906.5px;top:295.0px;color:#222;font-size:10.8px">Cleanup</div>
<div class="a" style="left:892px;top:314.3px;width:10px;height:10px;background:#fff;border:1px solid #8c8c8c;border-radius:2px"></div>
<div class="t" style="left:906.5px;top:312.1px;color:#222;font-size:10.8px">Update copyright</div>
<div class="t" style="left:876px;top:344.9px;color:#222;font-size:10.6px">After Commit</div>
<div class="a" style="left:947px;top:352px;width:182px;height:1px;background:#d4d4d4"></div>
<div class="a" style="left:1125.5px;top:87px;width:6px;height:219px;background:#d8d8d8"></div>
<div class="a" style="left:932px;top:405px;width:76px;height:17.5px;background:#f2f2f2;border:1px solid #d0d0d0;border-radius:3px"></div>
<div class="a" style="left:992px;top:406px;width:1px;height:15.5px;background:#d8d8d8"></div>
<div class="t" style="left:942px;top:406.5px;color:#a8a8a8;font-weight:bold;font-size:10.5px">Commit</div>
<svg style="left:997px;top:412px" width="7" height="4"><path d="M0 0h7L3.5 4z" fill="#a8a8a8"/></svg>
<div class="a" style="left:1017px;top:405px;width:53px;height:17.5px;background:#fff;border:1px solid #b8b8b8;border-radius:3px"></div>
<div class="t" style="left:1027.5px;top:406.5px;color:#222">Cancel</div>
<div class="a" style="left:1078px;top:405px;width:52px;height:17.5px;background:#fff;border:1px solid #b8b8b8;border-radius:3px"></div>
<div class="t" style="left:1092px;top:406.5px;color:#222">Help</div>
</body></html>
